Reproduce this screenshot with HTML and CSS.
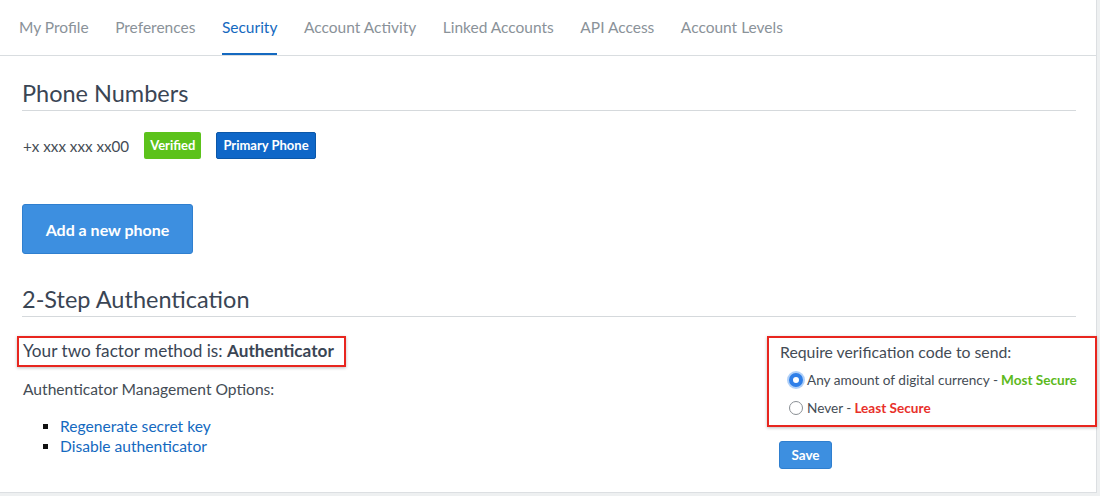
FILE: index.html
```html
<!DOCTYPE html>
<html>
<head>
<meta charset="utf-8">
<link rel="stylesheet" href="styles.css">
</head>
<body>
<div class="card">
  <nav class="tabs">
    <a class="tab">My Profile</a>
    <a class="tab">Preferences</a>
    <a class="tab active">Security</a>
    <a class="tab">Account Activity</a>
    <a class="tab">Linked Accounts</a>
    <a class="tab">API Access</a>
    <a class="tab">Account Levels</a>
  </nav>
  <div class="content">
    <h2 class="section-title">Phone Numbers</h2>
    <div class="phone-row">
      <span class="phone">+x xxx xxx xx00</span>
      <span class="badge badge-green">Verified</span>
      <span class="badge badge-blue">Primary Phone</span>
    </div>
    <button class="btn btn-large">Add a new phone</button>
    <h2 class="section-title title-2fa">2-Step Authentication</h2>
    <div class="twofa">
      <div class="twofa-left">
        <div class="method hl">Your two factor method is: <strong>Authenticator</strong></div>
        <p class="options-label">Authenticator Management Options:</p>
        <ul class="options">
          <li><a>Regenerate secret key</a></li>
          <li><a>Disable authenticator</a></li>
        </ul>
      </div>
      <div class="twofa-right">
        <div class="require hl">
          <div class="require-label">Require verification code to send:</div>
          <label class="radio-row"><span class="radio checked"></span>Any amount of digital currency - <b class="green">Most Secure</b></label>
          <label class="radio-row"><span class="radio"></span>Never - <b class="red">Least Secure</b></label>
        </div>
        <button class="btn btn-small">Save</button>
      </div>
    </div>
  </div>
</div>
</body>
</html>
```
FILE: styles.css
```css
html, body {
  margin: 0;
  padding: 0;
  background: #eef0f1;
  font-family: "Lato", "Open Sans", sans-serif;
  color: #3c4654;
}
.card {
  width: 1097px;
  height: 493px;
  background: #fff;
  border-right: 1px solid #dcdfe2;
  border-bottom: 1px solid #dcdfe2;
  box-sizing: border-box;
}
.tabs {
  display: flex;
  gap: 26.5px;
  padding: 0 0 0 19px;
  height: 56px;
  border-bottom: 1px solid #d9dde0;
  box-sizing: border-box;
}
.tab {
  font-size: 15.5px;
  color: #8a9299;
  line-height: 54px;
  border-bottom: 2px solid transparent;
}
.tab.active {
  color: #1469c0;
  border-bottom-color: #1469c0;
}
.content {
  padding: 0 20px 0 22px;
}
.section-title {
  margin: 0;
  font-size: 23.5px;
  font-weight: 400;
  color: #3a4554;
  padding-top: 24px;
  padding-bottom: 4px;
  border-bottom: 1px solid #d5d9dc;
  line-height: 26px;
}
.phone-row {
  display: flex;
  align-items: center;
  margin-top: 21px;
  height: 27px;
}
.phone {
  font-size: 15.2px;
  color: #444c55;
  margin-left: 1px;
  margin-right: 15px;
}
.badge {
  color: #fff;
  font-weight: 700;
  font-size: 13px;
  height: 27px;
  line-height: 27px;
  padding: 0 6px;
  border-radius: 2px;
  box-sizing: border-box;
}
.badge-green {
  background: #5cc21b;
  margin-right: 15px;
}
.badge-blue {
  background: #0f67c8;
  border: 1px solid #0b57a8;
  line-height: 25px;
}
.btn {
  display: block;
  font-family: inherit;
  color: #fff;
  font-weight: 700;
  background: #3d8fe0;
  border: 1px solid #2f7fcf;
  border-radius: 3px;
  cursor: pointer;
}
.btn-large {
  margin-top: 45px;
  width: 171px;
  height: 50px;
  font-size: 16px;
}
.title-2fa {
  padding-top: 32px;
}
.twofa {
  display: flex;
  justify-content: space-between;
  margin-top: 19px;
}
.twofa-left {
  padding-left: 1px;
}
.hl {
  border: 2px solid #e8261f;
  box-shadow: 0 1px 3px rgba(0,0,0,0.25);
}
.method {
  margin-left: -6px;
  font-size: 17.2px;
  padding: 3px 10px 4px 4px;
  color: #3a4554;
  width: max-content;
  line-height: 20px;
}
.method strong {
  font-weight: 700;
}
.options-label {
  margin: 13px 0 0 0;
  font-size: 15.6px;
  color: #444c55;
}
.options {
  margin: 18px 0 0 0;
  padding-left: 37px;
  list-style: square;
  font-size: 15.6px;
  line-height: 20px;
}
.options li::marker {
  color: #111;
}
.options a {
  color: #1469c0;
}
.twofa-right {
  width: 318px;
  margin-right: -21px;
}
.require {
  margin-left: -12px;
  padding: 4px 10px 8px 11px;
  height: 91px;
  box-sizing: border-box;
}
.require-label {
  font-size: 15.8px;
  color: #444c55;
  line-height: 20px;
}
.radio-row {
  display: flex;
  align-items: center;
  font-size: 13.6px;
  color: #444c55;
  margin-top: 9px;
  margin-left: 9px;
  line-height: 18px;
}
.radio-row + .radio-row {
  margin-top: 10px;
}
.radio-row b {
  font-weight: 700;
  margin-left: 3px;
}
.green { color: #5cb91c; }
.red { color: #e8302a; }
.radio {
  width: 14px;
  height: 14px;
  border-radius: 50%;
  border: 1px solid #8a8f94;
  margin-right: 4px;
  box-sizing: border-box;
  background: #fff;
  flex: none;
}
.radio.checked {
  border: 4px solid #2f7fe8;
  background: #fff;
  box-shadow: 0 0 0 2px rgba(80,150,240,0.45);
}
.btn-small {
  margin-top: 14px;
  width: 53px;
  height: 28px;
  font-size: 13.5px;
}
```
